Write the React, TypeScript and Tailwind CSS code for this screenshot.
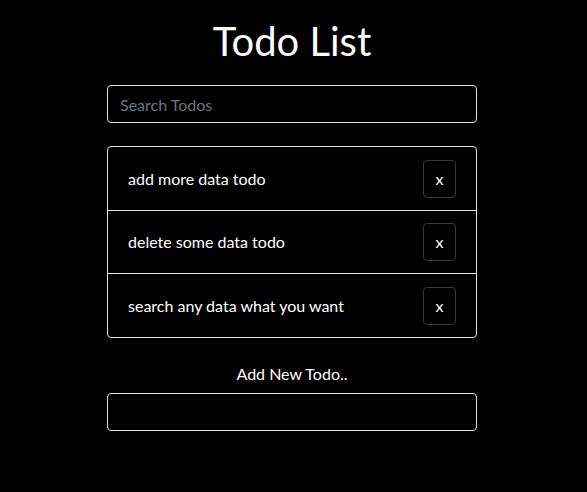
import React from "react";

const todos = [
  "add more data todo",
  "delete some data todo",
  "search any data what you want",
];

const App = () => {
  return (
    <div
      className="min-h-screen w-full bg-black text-white"
      style={{ fontFamily: "Lato, 'Open Sans', sans-serif" }}
    >
      <div className="ml-[107px] w-[370px] pt-[17px]">
        {/* title */}
        <h1 className="text-center text-[40px] leading-[48px]">Todo List</h1>

        <input
          type="text"
          placeholder="Search Todos"
          className="mt-[20px] block h-[38px] w-full rounded border border-[#dee2e6] bg-black px-3 text-base text-white placeholder:text-[#6c757d] outline-none"
        />

        <ul className="mt-[23px] rounded border border-[#dee2e6]">
          {todos.map((t, i) => (
            <li
              key={t}
              className={
                "flex items-center justify-between pl-5 pr-5 " +
                (i > 0 ? "border-t border-[#dee2e6] " : "") +
                (i === todos.length - 1 ? "h-[64px]" : "h-[63px]")
              }
            >
              <span className="text-base">{t}</span>
              <button className="h-[38px] w-[33px] rounded border border-[#3a3a3a] text-base">
                x
              </button>
            </li>
          ))}
        </ul>

        <p className="mt-[24px] text-center text-base leading-6">Add New Todo..</p>
        <input
          type="text"
          className="mt-[7px] block h-[38px] w-full rounded border border-[#dee2e6] bg-black px-3 text-base text-white outline-none"
        />
      </div>
    </div>
  );
};

export default App;
